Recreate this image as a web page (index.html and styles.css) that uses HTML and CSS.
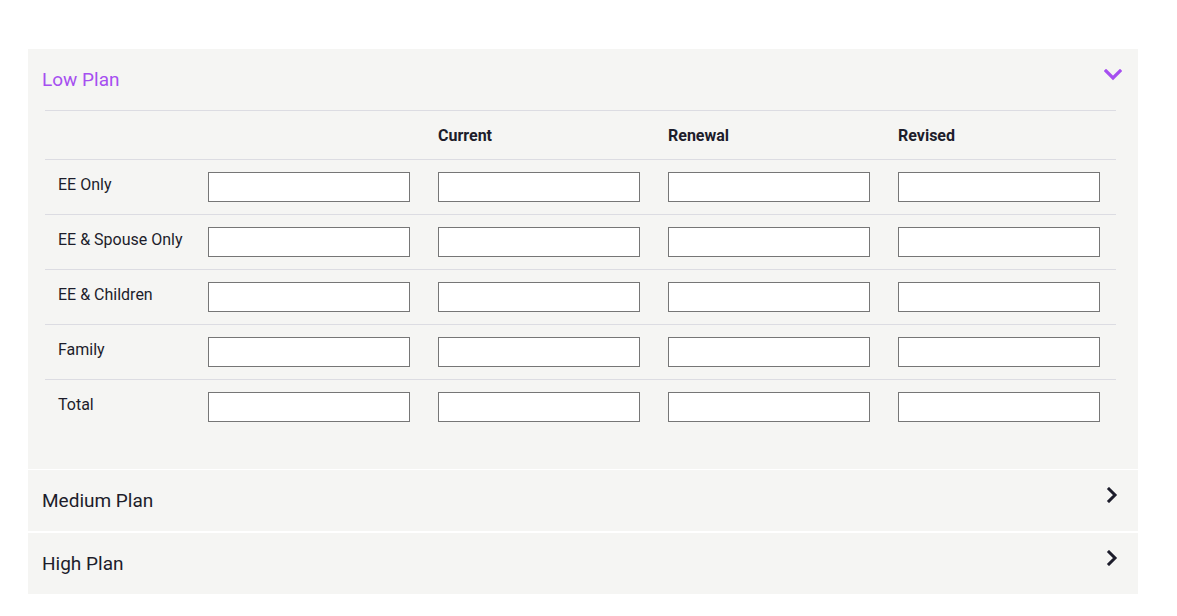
FILE: index.html
```html
<!DOCTYPE html>
<html>
<head>
<meta charset="utf-8">
<link rel="stylesheet" href="styles.css">
</head>
<body>
<div class="accordion">
  <section class="panel open">
    <div class="panel-head">
      <span class="panel-title active">Low Plan</span>
      <svg class="chev" width="18" height="12" viewBox="0 0 18 12"><polyline points="2,2 9,9 16,2" fill="none" stroke="#a64ff0" stroke-width="3.2" stroke-linecap="square"/></svg>
    </div>
    <div class="panel-body">
      <div class="grid">
        <div class="row head">
          <div class="cell"></div>
          <div class="cell th">Current</div>
          <div class="cell th">Renewal</div>
          <div class="cell th">Revised</div>
        </div>
        <div class="row">
          <div class="cell label">EE Only</div>
          <div class="cell"><input type="text"></div>
          <div class="cell"><input type="text"></div>
          <div class="cell"><input type="text"></div>
          <div class="cell"><input type="text"></div>
        </div>
        <div class="row">
          <div class="cell label">EE &amp; Spouse Only</div>
          <div class="cell"><input type="text"></div>
          <div class="cell"><input type="text"></div>
          <div class="cell"><input type="text"></div>
          <div class="cell"><input type="text"></div>
        </div>
        <div class="row">
          <div class="cell label">EE &amp; Children</div>
          <div class="cell"><input type="text"></div>
          <div class="cell"><input type="text"></div>
          <div class="cell"><input type="text"></div>
          <div class="cell"><input type="text"></div>
        </div>
        <div class="row">
          <div class="cell label">Family</div>
          <div class="cell"><input type="text"></div>
          <div class="cell"><input type="text"></div>
          <div class="cell"><input type="text"></div>
          <div class="cell"><input type="text"></div>
        </div>
        <div class="row">
          <div class="cell label">Total</div>
          <div class="cell"><input type="text"></div>
          <div class="cell"><input type="text"></div>
          <div class="cell"><input type="text"></div>
          <div class="cell"><input type="text"></div>
        </div>
      </div>
    </div>
  </section>
  <section class="panel">
    <div class="panel-head">
      <span class="panel-title">Medium Plan</span>
      <svg class="chev-r" width="12" height="16" viewBox="0 0 12 16"><polyline points="3,2 9,8 3,14" fill="none" stroke="#1d1d2b" stroke-width="3" stroke-linecap="square"/></svg>
    </div>
  </section>
  <section class="panel">
    <div class="panel-head">
      <span class="panel-title">High Plan</span>
      <svg class="chev-r" width="12" height="16" viewBox="0 0 12 16"><polyline points="3,2 9,8 3,14" fill="none" stroke="#1d1d2b" stroke-width="3" stroke-linecap="square"/></svg>
    </div>
  </section>
</div>
</body>
</html>
```
FILE: styles.css
```css
html, body {
  margin: 0;
  padding: 0;
  background: #ffffff;
  font-family: Roboto, "Liberation Sans", sans-serif;
  color: #1d1d2b;
}

.accordion {
  width: 1110px;
  margin: 49px 0 0 28px;
  display: flex;
  flex-direction: column;
  gap: 1px;
}

.panel {
  background: #f5f5f3;
}

.panel + .panel + .panel {
  margin-top: 1px;
}

.panel-head {
  height: 61px;
  display: flex;
  align-items: center;
  justify-content: space-between;
  padding: 0 16px 0 14px;
}

.panel-title {
  font-size: 19px;
  line-height: 24px;
  color: #1d1d2b;
}

.panel-title.active {
  color: #a64ff0;
}

.chev {
  margin-top: -10px;
}

.chev-r {
  margin-top: -11px;
  margin-right: 4px;
}

.panel-body {
  padding: 0 22px 35px 17px;
}

.grid {
  display: flex;
  flex-direction: column;
}

.row {
  display: grid;
  grid-template-columns: 150px 230px 230px 230px 230px;
  border-top: 1px solid #dcdce2;
}

.row.head {
  grid-template-columns: 380px 230px 230px 230px;
}

.cell {
  padding: 12px 13px;
}

.th {
  padding: 15px 13px 13px;
  font-size: 16px;
  line-height: 20px;
  font-weight: 700;
}

.row.head .cell:first-child {
  padding: 14px 13px;
  height: 20px;
}

.label {
  padding: 15px 0 0 13px;
  font-size: 16px;
  line-height: 20px;
  white-space: nowrap;
}

input {
  display: block;
  box-sizing: border-box;
  width: 202px;
  height: 30px;
  margin: 0;
  border: 1px solid #767676;
  background: #ffffff;
  border-radius: 0;
  padding: 0 4px;
}
```
